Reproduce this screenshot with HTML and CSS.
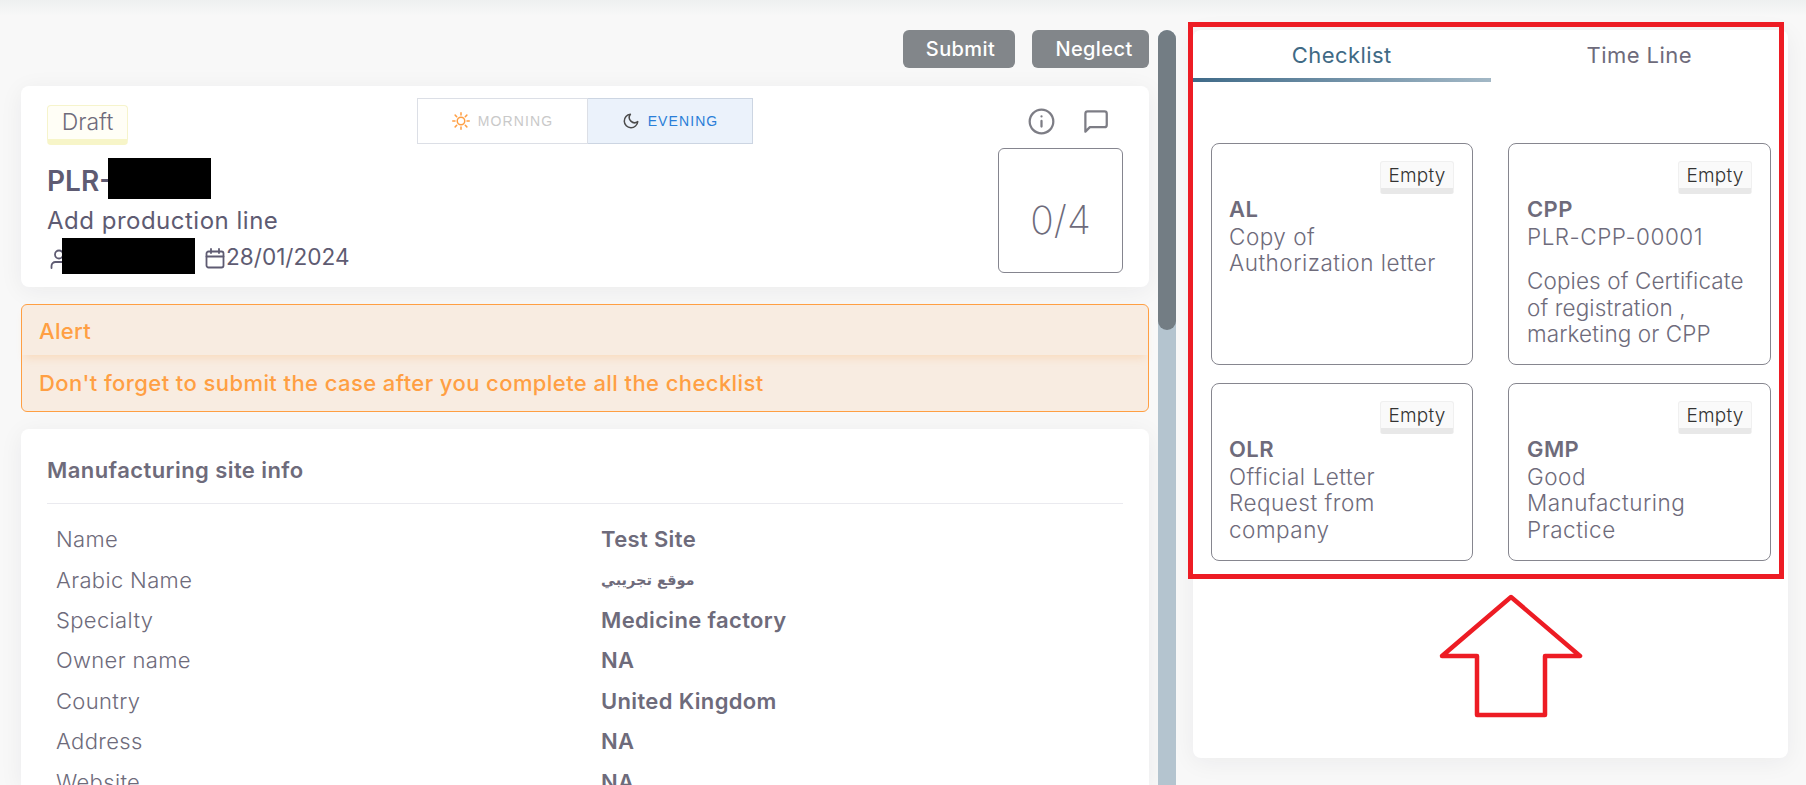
FILE: index.html
```html
<!DOCTYPE html>
<html lang="en">
<head>
    <meta charset="UTF-8">
    <meta name="viewport" content="width=device-width, initial-scale=1.0">
    <title>PLR case</title>
    <link rel="stylesheet" href="styles.css">
</head>
<body>
<div class="page">
    <div class="main-col">
        <div class="actions">
            <button class="action-btn submit-btn" type="button">Submit</button>
            <button class="action-btn neglect-btn" type="button">Neglect</button>
        </div>

        <div class="card head-card">
            <div class="head-top">
                <span class="badge-draft">Draft</span>
                <div class="shift-toggle">
                    <div class="shift shift-morning">
                        <svg width="18" height="18" viewBox="0 0 24 24" fill="none" stroke="#ff9f43" stroke-width="2" stroke-linecap="round">
                            <circle cx="12" cy="12" r="5"/>
                            <path d="M12 1v3M12 20v3M4.2 4.2l2.1 2.1M17.7 17.7l2.1 2.1M1 12h3M20 12h3M4.2 19.8l2.1-2.1M17.7 6.3l2.1-2.1"/>
                        </svg>
                        <span>MORNING</span>
                    </div>
                    <div class="shift shift-evening">
                        <svg width="18" height="18" viewBox="0 0 24 24" fill="none" stroke="#4b4b4b" stroke-width="2" stroke-linecap="round" stroke-linejoin="round">
                            <path d="M21 12.8A9 9 0 1 1 11.2 3 7 7 0 0 0 21 12.8z"/>
                        </svg>
                        <span>EVENING</span>
                    </div>
                </div>
                <div class="head-icons">
                    <svg width="27" height="27" viewBox="0 0 24 24" fill="none" stroke="#7d7d85" stroke-width="2" stroke-linecap="round">
                        <circle cx="12" cy="12" r="10.5"/>
                        <path d="M12 16.5v-5M12 7.5h.01"/>
                    </svg>
                    <svg width="27" height="27" viewBox="0 0 24 24" fill="none" stroke="#7d7d85" stroke-width="2" stroke-linecap="round" stroke-linejoin="round">
                        <path d="M22 15a2 2 0 0 1-2 2H7l-4 4V5a2 2 0 0 1 2-2h15a2 2 0 0 1 2 2z"/>
                    </svg>
                </div>
            </div>
            <div class="head-body">
                <div class="head-info">
                    <div class="case-code"><span class="code-prefix">PLR-</span><span class="redact redact-code"></span></div>
                    <div class="case-title">Add production line</div>
                    <div class="case-meta">
                        <svg class="meta-user" width="18" height="20" viewBox="0 0 18 20" fill="none" stroke="#5e5b72" stroke-width="1.8" stroke-linecap="round">
                            <circle cx="9" cy="5.5" r="4"/>
                            <path d="M1.5 19v-2a4 4 0 0 1 4-4h7"/>
                        </svg>
                        <span class="redact redact-user"></span>
                        <svg class="meta-cal" width="20" height="21" viewBox="0 0 20 21" fill="none" stroke="#5e5b72" stroke-width="1.8" stroke-linecap="round">
                            <rect x="1.5" y="3.5" width="17" height="16" rx="2"/>
                            <path d="M1.5 8.5h17M6 1v4M14 1v4"/>
                        </svg>
                        <span class="case-date">28/01/2024</span>
                    </div>
                </div>
                <div class="score-box">0/4</div>
            </div>
        </div>

        <div class="alert">
            <div class="alert-head">Alert</div>
            <div class="alert-body">Don't forget to submit the case after you complete all the checklist</div>
        </div>

        <div class="card site-card">
            <div class="site-title">Manufacturing site info</div>
            <div class="site-rows">
                <span class="site-label">Name</span><span class="site-value">Test Site</span>
                <span class="site-label">Arabic Name</span><span class="site-value site-arabic">موقع تجريبي</span>
                <span class="site-label">Specialty</span><span class="site-value">Medicine factory</span>
                <span class="site-label">Owner name</span><span class="site-value">NA</span>
                <span class="site-label">Country</span><span class="site-value">United Kingdom</span>
                <span class="site-label">Address</span><span class="site-value">NA</span>
                <span class="site-label">Website</span><span class="site-value">NA</span>
            </div>
        </div>
    </div>

    <div class="scroll-track"><div class="scroll-thumb"></div></div>

    <div class="card side-card">
        <div class="tabs">
            <div class="tab tab-active">Checklist</div>
            <div class="tab">Time Line</div>
        </div>
        <div class="check-grid">
            <div class="check-card">
                <span class="badge-empty">Empty</span>
                <div class="check-code">AL</div>
                <div class="check-text">Copy of<br>Authorization letter</div>
            </div>
            <div class="check-card">
                <span class="badge-empty">Empty</span>
                <div class="check-code">CPP</div>
                <div class="check-text check-ref">PLR-CPP-00001</div>
                <div class="check-text check-long">Copies of Certificate<br>of registration ,<br>marketing or CPP</div>
            </div>
            <div class="check-card">
                <span class="badge-empty">Empty</span>
                <div class="check-code">OLR</div>
                <div class="check-text">Official Letter<br>Request from<br>company</div>
            </div>
            <div class="check-card">
                <span class="badge-empty">Empty</span>
                <div class="check-code">GMP</div>
                <div class="check-text">Good<br>Manufacturing<br>Practice</div>
            </div>
        </div>
    </div>
</div>

<svg class="markup" width="1806" height="785" viewBox="0 0 1806 785" fill="none" stroke="#ed1c24" stroke-width="5">
    <rect x="1190.5" y="24.5" width="591" height="552"/>
    <path stroke-width="4.5" stroke-linejoin="round" d="M1511 597L1580 656H1545V715H1477V656H1442Z"/>
</svg>
</body>
</html>
```

FILE: styles.css
```css
* {
    box-sizing: border-box;
}

html, body {
    height: 100%;
    margin: 0;
}

body {
    position: relative;
    overflow: hidden;
    font-family: "Inter", "Noto Sans", "DejaVu Sans", sans-serif;
    color: #6e6b7b;
    background: linear-gradient(#eef0f0, #f8f8f8 16px, #f8f8f8);
}

.page {
    display: flex;
    height: 785px;
    padding: 30px 18px 0 21px;
}

.main-col {
    width: 1128px;
    flex-shrink: 0;
}

.card {
    background: #fff;
    border-radius: 8px;
    box-shadow: 0 4px 24px rgba(34, 41, 47, 0.06);
}

/* top buttons */
.actions {
    display: flex;
    justify-content: flex-end;
    gap: 17px;
    height: 38px;
}

.action-btn {
    height: 38px;
    border: 0;
    border-radius: 6px;
    background: #82868a;
    color: #fff;
    font-family: inherit;
    font-size: 20px;
    font-weight: 500;
    letter-spacing: 0.4px;
}

.submit-btn {
    width: 112px;
    padding: 0 0 0 3px;
}

.neglect-btn {
    width: 117px;
    padding: 0 0 0 7px;
}

/* case header */
.head-card {
    height: 201px;
    margin-top: 18px;
    padding: 12px 26px 14px;
}

.head-top {
    display: flex;
    height: 47px;
}

.badge-draft {
    width: 81px;
    height: 40px;
    margin-top: 7px;
    padding-top: 2px;
    border: 1px solid #f6f4cc;
    border-bottom: 6px solid #f7f5c8;
    border-radius: 4px;
    background: #fffef6;
    font-size: 23px;
    line-height: 28px;
    font-weight: 300;
    text-align: center;
}

.shift-toggle {
    display: flex;
    height: 46px;
    margin-left: 289px;
    font-family: "Liberation Sans", Arial, sans-serif;
    font-size: 14px;
    letter-spacing: 1.1px;
}

.shift {
    display: flex;
    align-items: center;
    justify-content: center;
    gap: 8px;
    border: 1px solid #dcdfe6;
}

.shift-morning {
    width: 171px;
    color: #c9c9c9;
}

.shift-evening {
    width: 165px;
    border-color: #ccd5e2;
    border-left-width: 0;
    background: #ebf2fb;
    color: #2a7ed8;
}

.head-icons {
    display: flex;
    gap: 27px;
    margin-left: auto;
    padding: 10px 14px 0 0;
}

.head-body {
    display: flex;
    justify-content: space-between;
    margin-top: 3px;
}

.case-code {
    display: flex;
    align-items: center;
    height: 41px;
    margin-top: 10px;
    font-size: 28px;
    font-weight: 600;
    color: #5e5b72;
}

.code-prefix {
    width: 61px;
    padding-top: 4px;
    white-space: nowrap;
}

.redact {
    display: block;
    position: relative;
    background: #000;
}

.redact-code {
    width: 103px;
    height: 41px;
}

.case-title {
    margin-top: 7px;
    font-size: 24px;
    line-height: 30px;
    letter-spacing: 0.5px;
    color: #5e5b72;
}

.case-meta {
    display: flex;
    align-items: center;
    height: 36px;
    margin-top: 2px;
    font-size: 22.6px;
    color: #5e5b72;
}

.meta-user {
    margin: 6px -6px 0 3px;
}

.redact-user {
    width: 133px;
    height: 36px;
}

.meta-cal {
    margin: 5px 1px 0 10px;
}

.score-box {
    display: flex;
    align-items: center;
    justify-content: center;
    width: 125px;
    height: 125px;
    padding-top: 17px;
    border: 1px solid #85858f;
    border-radius: 6px;
    font-size: 39px;
    font-weight: 200;
}

/* alert */
.alert {
    height: 108px;
    margin-top: 17px;
    border: 1px solid #ff9f43;
    border-radius: 6px;
    background: #f8ece1;
    color: #ff9f43;
    font-size: 22px;
    font-weight: 500;
    letter-spacing: 0.41px;
}

.alert-head {
    height: 50px;
    padding: 13px 17px 0;
    box-shadow: 0 6px 8px -3px rgba(255, 159, 67, 0.22);
    font-weight: 500;
    letter-spacing: 0.3px;
}

.alert-body {
    padding: 15px 17px 0;
}

/* site info */
.site-card {
    height: 356px;
    margin-top: 17px;
    padding: 0 26px;
    overflow: hidden;
    border-radius: 8px 8px 0 0;
}

.site-title {
    height: 75px;
    padding-top: 28px;
    border-bottom: 1px solid #eaeaef;
    font-size: 22px;
    line-height: 27px;
    font-weight: 600;
    letter-spacing: 0.43px;
}

.site-rows {
    display: grid;
    grid-template-columns: 545px 1fr;
    grid-auto-rows: 40.4px;
    align-items: center;
    margin-top: 15px;
    padding-left: 9px;
    font-size: 22px;
    letter-spacing: 0.35px;
}

.site-label {
    font-weight: 300;
}

.site-value {
    font-weight: 600;
}

.site-arabic {
    font-family: "DejaVu Sans", sans-serif;
    font-size: 14.5px;
    letter-spacing: 0;
}

/* fake scrollbar of the main column */
.scroll-track {
    width: 18px;
    height: 755px;
    margin-left: 9px;
    flex-shrink: 0;
    border-radius: 9px 9px 0 0;
    background: #b4c4cf;
}

.scroll-thumb {
    height: 300px;
    border-radius: 9px;
    background: #737d84;
}

/* right panel */
.side-card {
    width: 595px;
    height: 728px;
    margin-left: 17px;
}

.tabs {
    display: flex;
    height: 52px;
}

.tab {
    width: 298px;
    padding-top: 12px;
    font-size: 22px;
    letter-spacing: 0.45px;
    text-align: center;
}

.tab-active {
    border-bottom: 4px solid;
    border-image: linear-gradient(90deg, #3f6a88, #a3b8c6) 1;
    color: #406a85;
}

.check-grid {
    display: grid;
    grid-template-columns: 262px 263px;
    grid-template-rows: 222px 178px;
    column-gap: 35px;
    row-gap: 18px;
    margin: 61px 0 0 18px;
}

.check-card {
    padding: 17px 18px 0 17px;
    border: 1px solid #86868f;
    border-radius: 8px;
}

.check-card:nth-child(even) {
    padding-left: 18px;
}

.badge-empty {
    display: block;
    width: 74px;
    height: 33px;
    margin-left: auto;
    padding-top: 3px;
    border: 1px solid #f0f0f0;
    border-bottom: 6px solid #e8e8e8;
    border-radius: 3px;
    background: #fafafa;
    color: #333;
    font-size: 19px;
    line-height: 22px;
    letter-spacing: 0.2px;
    font-weight: 300;
    text-align: center;
}

.check-code {
    margin-top: 2px;
    font-size: 22px;
    line-height: 26px;
    font-weight: 600;
    letter-spacing: 0.4px;
}

.check-text {
    position: relative;
    top: 2px;
    font-size: 22.5px;
    line-height: 26.4px;
    letter-spacing: 0.5px;
    font-weight: 300;
}

.check-ref {
    margin-bottom: 18px;
}

.check-long {
    letter-spacing: 0.1px;
}

/* red annotation drawn on top of the screenshot */
.markup {
    position: absolute;
    top: 0;
    left: 0;
}
```
